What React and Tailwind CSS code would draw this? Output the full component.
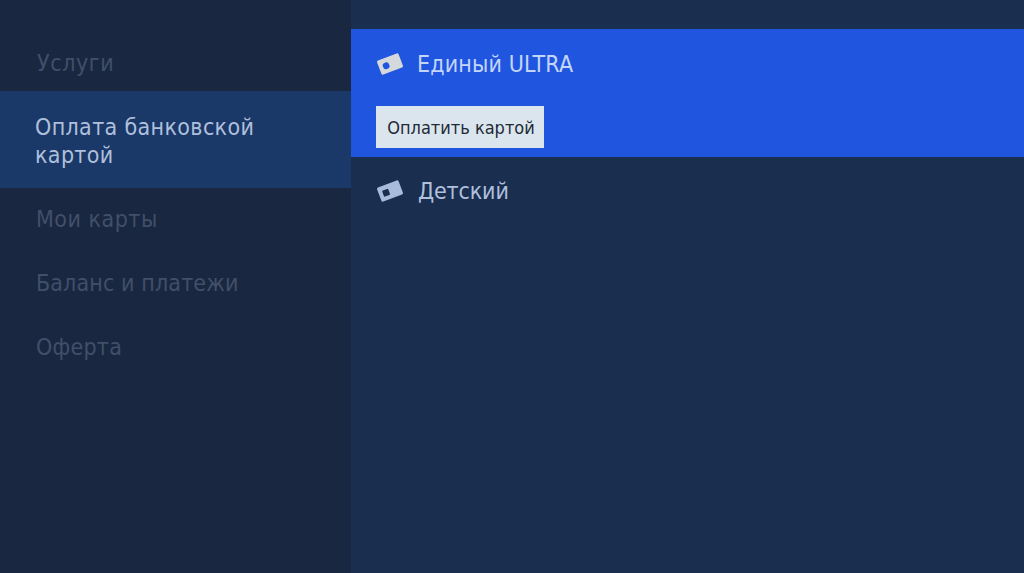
import React from 'react';

const MENU = [
  { label: 'Мои карты', tracking: 'tracking-[0.5px]' },
  { label: 'Баланс и платежи', tracking: 'tracking-[0.12px]' },
  { label: 'Оферта', tracking: 'tracking-[0.25px]' },
];

function CardIcon({ hole, fill, square }) {
  return (
    <svg width="28" height="24" viewBox="0 0 28 24" className="shrink-0">
      <g transform="rotate(-21 14 12)">
        <rect x="2.5" y="4.5" width="23" height="15" rx="1.5" fill={fill} />
        <rect x="6.5" y="9" width="6.5" height="6.5" rx={square ? 1 : 2.8} fill={hole} />
      </g>
    </svg>
  );
}

export default function App() {
  return (
    <div className="flex h-[573px] w-[1024px] overflow-hidden font-['DejaVu_Sans_Condensed',sans-serif] text-[23px]">
      <aside className="w-[351px] shrink-0 bg-[#1a2740] pt-[31px]">
        <div className="flex h-[60px] items-center pl-[37px] pt-[4px] tracking-[0.6px] text-[#414f69]">Услуги</div>
        <div className="h-[97px] bg-[#1a3868] pl-[35px] pt-[22px] leading-[28px] tracking-[0.35px] text-[#b0c0dc]">
          Оплата банковской
          <br />
          картой
        </div>
        {MENU.map((item) => (
          <div key={item.label} className={`flex h-[64px] items-center pb-[2px] pl-[36px] text-[#414f69] ${item.tracking}`}>
            {item.label}
          </div>
        ))}
      </aside>
      <main className="flex-1 bg-[#1a2e50] pt-[29px]">
        <div className="h-[128px] bg-[#2055e0]">
          <div className="flex h-[70px] items-center gap-[13px] pl-[25px] tracking-[0.15px] text-[#c3d6f8]">
            <CardIcon fill="#d5d9dc" hole="#2055e0" />
            Единый ULTRA
          </div>
          <button className="ml-[25px] mt-[7px] h-[42px] w-[168px] bg-[#dae5ed] pl-[2px] text-[18px] text-[#1f2a38]">
            Оплатить картой
          </button>
        </div>
        <div className="flex h-[68px] items-center gap-[14px] pl-[25px] tracking-[-0.15px] text-[#b0c0dc]">
          <CardIcon fill="#a9bcdc" hole="#1a2e50" square />
          Детский
        </div>
      </main>
    </div>
  );
}
